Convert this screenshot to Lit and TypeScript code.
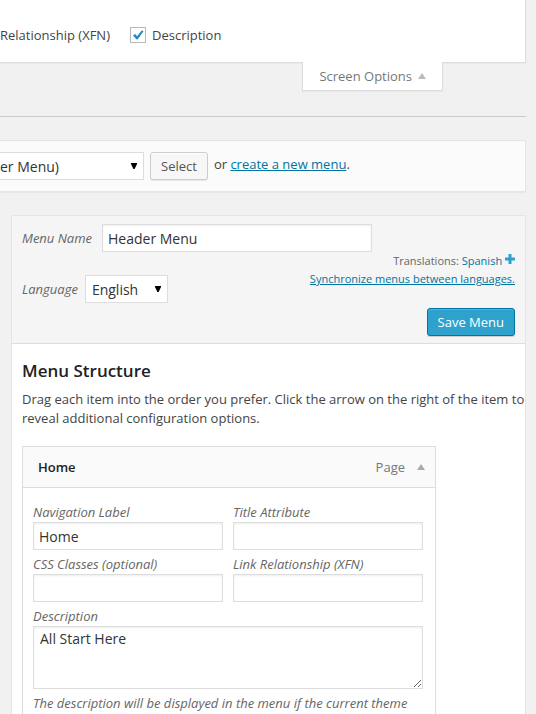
import { LitElement, html, css, svg } from "lit";
import { customElement } from "lit/decorators.js";

const caretDown = html`<svg class="caret" width="6" height="7" viewBox="0 0 6 7" aria-hidden="true">
  <path d="M0 0h6v1L3.6 6H2.4L0 1z" fill="#000" />
</svg>`;

const triangleUp = (cls: string) => html`<svg class=${cls} width="8" height="6" viewBox="0 0 8 6" aria-hidden="true">
  ${svg`<path d="M4 0l4 6H0z" fill="currentColor" />`}
</svg>`;

@customElement("app-root")
export class AppRoot extends LitElement {
  static styles = css`
    :host {
      display: flex;
      flex-direction: column;
      min-height: 100vh;
      box-sizing: border-box;
      padding-right: 10px;
      background: #f1f1f1;
      color: #444;
      font: 13px/19px "Open Sans", sans-serif;
    }
    * {
      box-sizing: border-box;
    }
    a {
      color: #0074a2;
    }
    input,
    textarea,
    select,
    button {
      font-family: inherit;
      margin: 0;
      border-radius: 0;
      outline: none;
    }
    .field,
    .select {
      border: 1px solid #ddd;
      background: #fff;
      color: #333;
      font-size: 14px;
      box-shadow: inset 0 1px 2px rgba(0, 0, 0, 0.07);
    }
    .field {
      display: block;
      width: 100%;
      height: 28px;
      padding: 2px 5px;
    }
    .select {
      appearance: none;
      height: 28px;
      padding: 0 28px 0 6px;
      box-shadow: none;
    }
    .select-wrap {
      position: relative;
      display: flex;
    }
    .caret {
      position: absolute;
      right: 7px;
      top: 11px;
      pointer-events: none;
    }

    .screen-meta {
      display: flex;
      align-items: center;
      gap: 20px;
      padding-top: 8px;
      height: 63px;
      background: #fff;
      border: solid #ddd;
      border-width: 0 1px 1px 0;
      box-shadow: 0 1px 1px rgba(0, 0, 0, 0.03);
    }
    .toggle {
      display: flex;
      align-items: center;
      gap: 6px;
    }
    .check {
      position: relative;
      display: flex;
    }
    .check input {
      appearance: none;
      width: 16px;
      height: 16px;
      border: 1px solid #b4b9be;
      background: #fff;
    }
    .check svg {
      position: absolute;
      left: 3px;
      top: 3px;
      pointer-events: none;
      visibility: hidden;
    }
    .check input:checked + svg {
      visibility: visible;
    }
    .tab-row {
      display: flex;
      justify-content: flex-end;
      padding-right: 83px;
      margin-top: -1px;
    }
    .screen-tab {
      position: relative;
      display: flex;
      align-items: center;
      gap: 6px;
      height: 29px;
      padding: 0 16px;
      border: 1px solid #ddd;
      border-top: 0;
      background: #fff;
      color: #777;
      font-size: 13px;
      box-shadow: 0 1px 1px rgba(0, 0, 0, 0.03);
    }
    .tab-arrow {
      color: #bbb;
    }
    .rule {
      width: 100%;
      height: 1px;
      margin: 25px 0 23px;
      border: 0;
      background: #ccc;
    }

    .manage {
      display: flex;
      align-items: center;
      gap: 6px;
      height: 52px;
      background: #fbfbfb;
      border: 1px solid #e5e5e5;
      border-left: 0;
      box-shadow: 0 1px 1px rgba(0, 0, 0, 0.04);
    }
    .picker .select {
      width: 144px;
      padding-left: 0;
      border-left: 0;
    }
    .btn {
      height: 28px;
      padding: 0 10px;
      border: 1px solid #ccc;
      border-radius: 3px;
      background: #f7f7f7;
      color: #555;
      font-size: 13px;
      box-shadow: inset 0 1px 0 #fff, 0 1px 0 rgba(0, 0, 0, 0.08);
    }
    .primary {
      background: #2ea2cc;
      border-color: #0074a2;
      color: #fff;
      box-shadow: inset 0 1px 0 rgba(120, 200, 230, 0.5), 0 1px 0 rgba(0, 0, 0, 0.15);
    }
    .manage p {
      margin: 0 0 4px;
    }

    .editor {
      flex: 1;
      display: flex;
      flex-direction: column;
      margin: 23px 0 0 11px;
      background: #fff;
      border: 1px solid #e5e5e5;
      border-bottom: 0;
    }
    .editor-head {
      display: flex;
      justify-content: space-between;
      padding: 8px 10px 7px;
      background: #f5f5f5;
      border-bottom: 1px solid #ddd;
    }
    .names {
      display: flex;
      flex-direction: column;
      gap: 23px;
    }
    .name-row {
      display: flex;
      align-items: center;
      color: #666;
      font-style: italic;
      white-space: nowrap;
    }
    .name-row .field {
      width: 270px;
      margin-left: 10px;
    }
    .name-row .select-wrap {
      margin-left: 7px;
    }
    .head-side {
      display: flex;
      flex-direction: column;
      align-items: flex-end;
      padding-top: 28px;
      margin-left: -100px;
      font-size: 11px;
      line-height: 18px;
      color: #666;
      white-space: nowrap;
    }
    .head-side p {
      margin: 0;
    }
    .plain {
      text-decoration: none;
    }
    .head-side .btn {
      margin-top: 20px;
    }

    .body {
      flex: 1;
      display: flex;
      flex-direction: column;
      padding: 17px 10px 0;
    }
    h3 {
      margin: 0 0 9px;
      color: #222;
      font-size: 17px;
      line-height: 20px;
      font-weight: 600;
    }
    .body > p {
      margin: 0 0 18px;
      white-space: nowrap;
    }
    .item {
      flex: 1;
      width: 100%;
      max-width: 414px;
      border: 1px solid #ddd;
      border-bottom: 0;
    }
    .item-bar {
      display: flex;
      align-items: center;
      height: 41px;
      padding: 0 10px 0 15px;
      background: #fafafa;
      border-bottom: 1px solid #ddd;
      color: #777;
    }
    .item-title {
      flex: 1;
      color: #222;
      font-weight: 600;
    }
    .item-toggle {
      display: flex;
      margin-left: 12px;
      padding: 0;
      border: 0;
      background: none;
      color: #aaa;
    }
    .settings {
      display: grid;
      grid-template-columns: 1fr 1fr;
      gap: 5px 10px;
      padding: 15px 12px 0 10px;
      color: #666;
      font-style: italic;
    }
    .wide {
      grid-column: 1 / -1;
    }
    .area {
      height: 63px;
      padding: 2px 6px;
      line-height: 19px;
      resize: vertical;
    }
    .hint {
      display: block;
      margin-top: 5px;
    }
  `;

  render() {
    return html`
      <section class="screen-meta">
        <span>Relationship (XFN)</span>
        <label class="toggle">
          <span class="check">
            <input type="checkbox" checked />
            <svg width="11" height="10" viewBox="0 0 11 10" aria-hidden="true">
              <path d="M0 5.4L2.1 4l2 2.2L8.7.5l1.9.4L4.6 9.5H3.7z" fill="#1e8cbe" />
            </svg>
          </span>
          Description
        </label>
      </section>
      <div class="tab-row">
        <button class="screen-tab" type="button">Screen Options ${triangleUp("tab-arrow")}</button>
      </div>
      <hr class="rule" />

      <section class="manage">
        <div class="select-wrap picker">
          <select class="select" aria-label="Menu to edit"><option>er Menu)</option></select>
          ${caretDown}
        </div>
        <button class="btn" type="button">Select</button>
        <p>or <a href="#new">create a new menu</a>.</p>
      </section>

      <main class="editor">
        <header class="editor-head">
          <div class="names">
            <div class="name-row">
              <label for="menu-name">Menu Name</label>
              <input class="field" id="menu-name" type="text" value="Header Menu" />
            </div>
            <div class="name-row">
              <label for="language">Language</label>
              <div class="select-wrap">
                <select class="select" id="language"><option>English</option></select>
                ${caretDown}
              </div>
            </div>
          </div>
          <div class="head-side">
            <p>
              Translations:
              <a class="plain" href="#spanish">Spanish
                <svg width="10" height="11" viewBox="0 0 10 11" aria-hidden="true">
                  <path d="M3.5 0h3v3.5H10v3H6.5V10h-3V6.5H0v-3h3.5z" fill="#2ea2cc" /></svg></a>
            </p>
            <a href="#sync">Synchronize menus between languages.</a>
            <button class="btn primary" type="button">Save Menu</button>
          </div>
        </header>
        <div class="body">
          <h3>Menu Structure</h3>
          <p>
            Drag each item into the order you prefer. Click the arrow on the right of the item to<br />
            reveal additional configuration options.
          </p>
          <article class="item">
            <div class="item-bar">
              <span class="item-title">Home</span>
              <span>Page</span>
              <button class="item-toggle" type="button" aria-label="Close item">${triangleUp("")}</button>
            </div>
            <div class="settings">
              <label>Navigation Label<input class="field" type="text" value="Home" /></label>
              <label>Title Attribute<input class="field" type="text" /></label>
              <label>CSS Classes (optional)<input class="field" type="text" /></label>
              <label>Link Relationship (XFN)<input class="field" type="text" /></label>
              <label class="wide">
                Description
                <textarea class="field area">All Start Here</textarea>
                <span class="hint">The description will be displayed in the menu if the current theme</span>
              </label>
            </div>
          </article>
        </div>
      </main>
    `;
  }
}
